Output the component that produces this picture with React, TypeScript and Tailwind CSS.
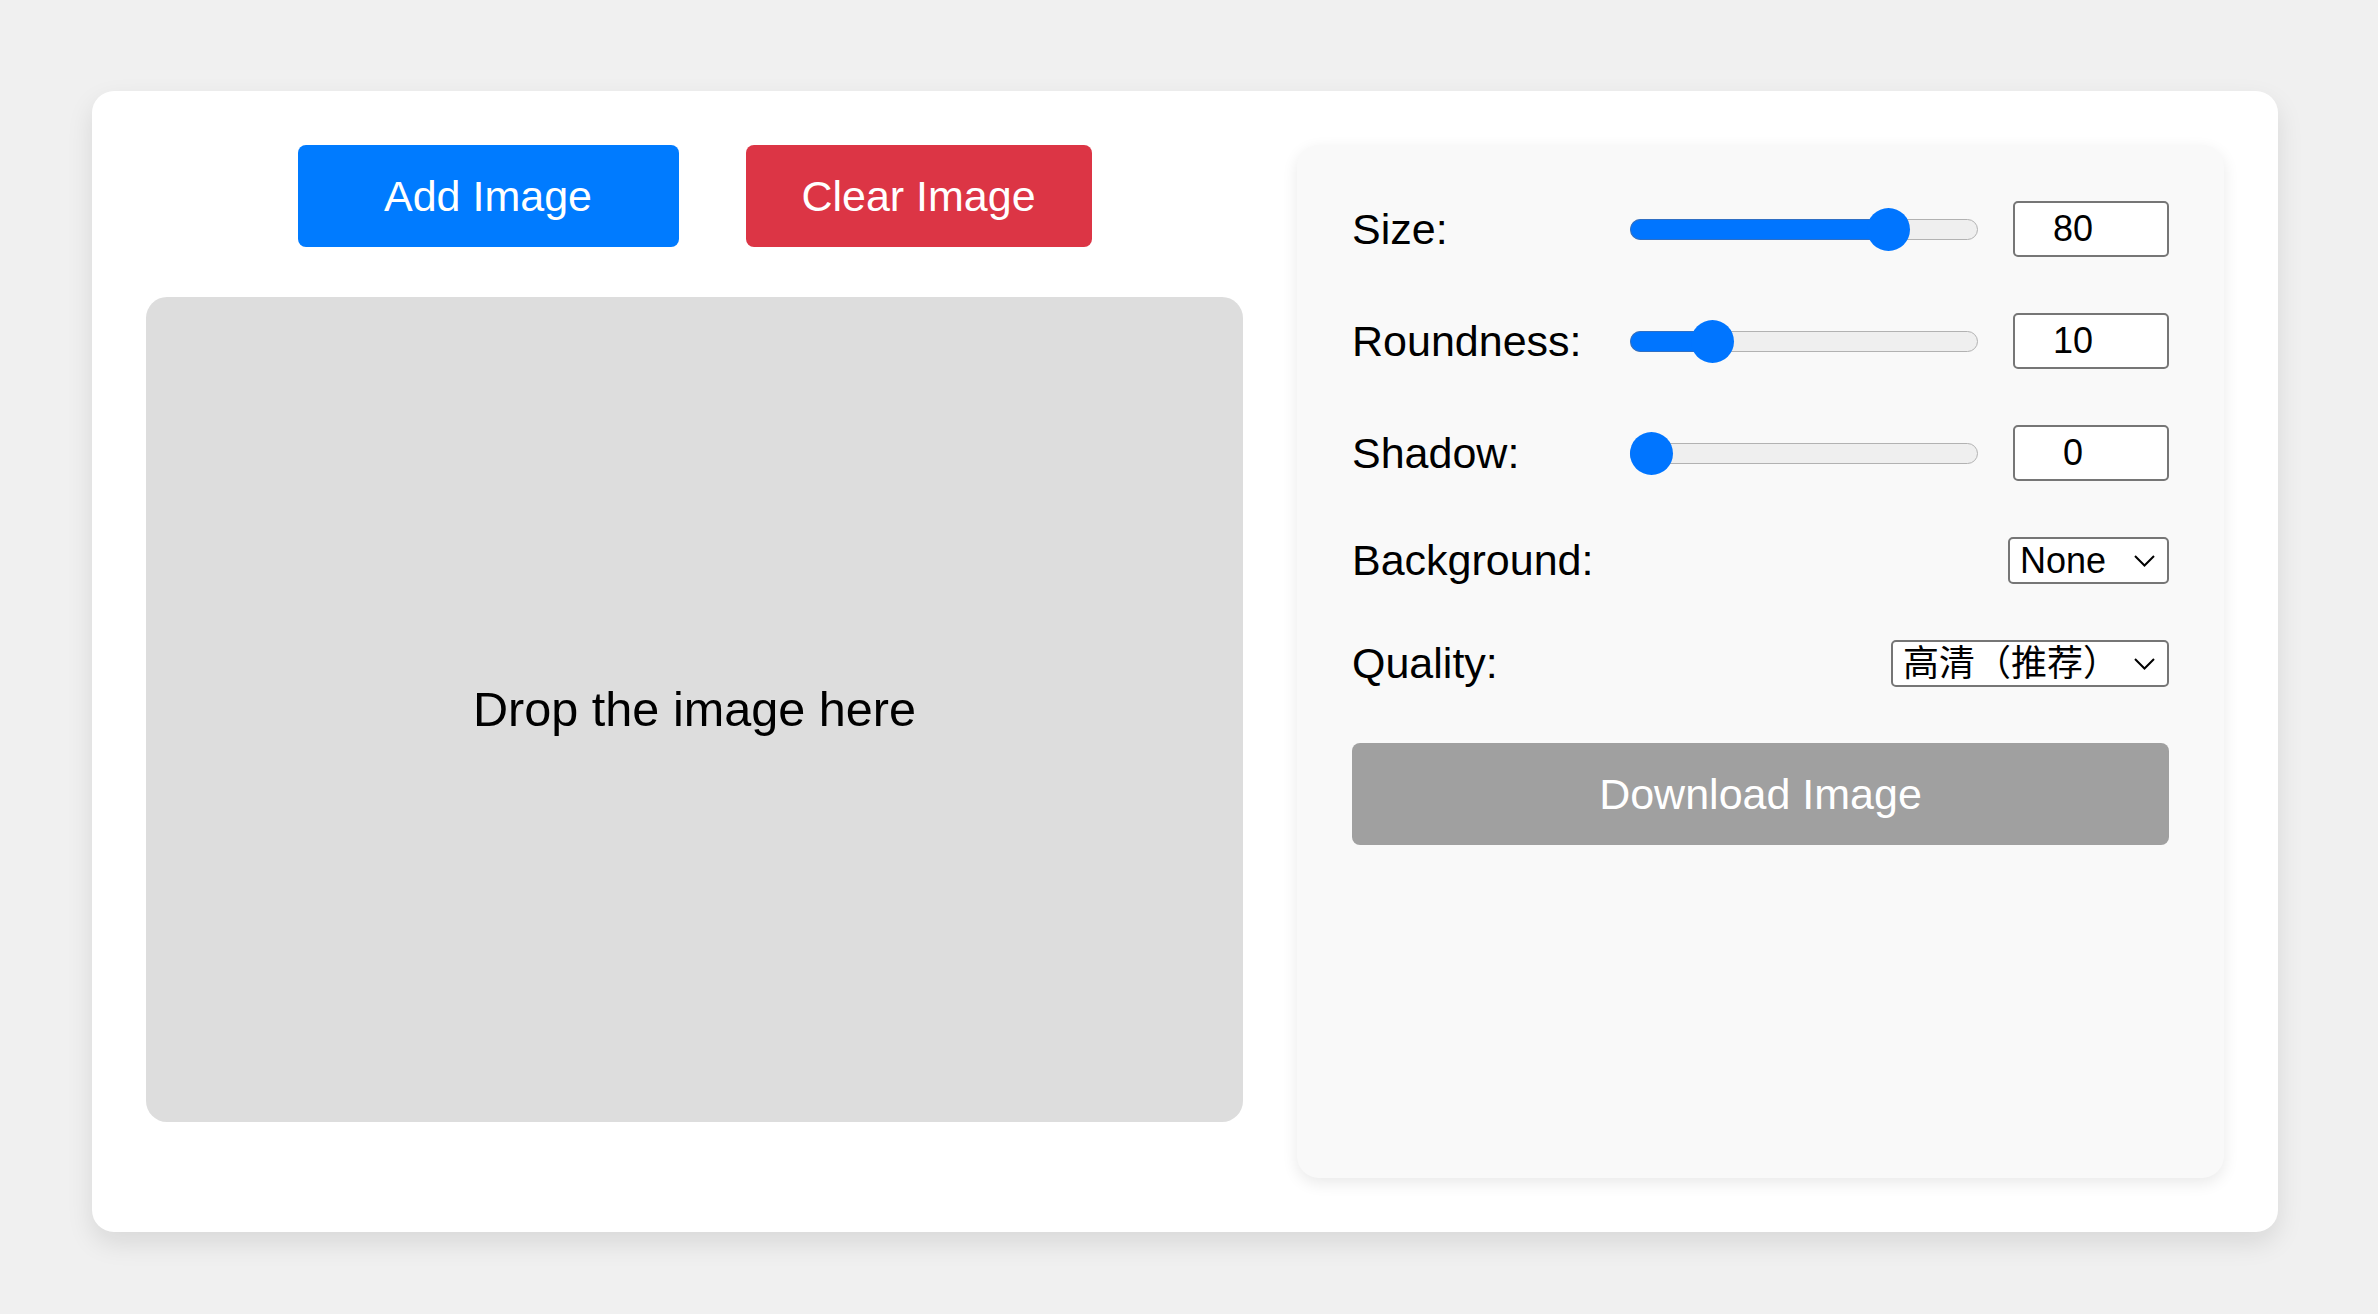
import React from 'react';

// thumb travel: track is 348px wide, thumb is 43px
function Slider({ frac }: { frac: number }) {
  const center = 21.5 + frac * (348 - 43);
  return (
    <div className="relative w-[348px] h-[43px] flex items-center">
      <div className="w-full h-[21px] rounded-full border-[1.5px] border-[#b2b2b2] bg-[#efefef]" />
      <div
        className="absolute left-0 top-[11px] h-[21px] rounded-l-full bg-[#0075ff] border-[1.5px] border-r-0 border-[#2f6fc4]"
        style={{ width: center }}
      />
      <div
        className="absolute top-0 w-[43px] h-[43px] rounded-full bg-[#0075ff]"
        style={{ left: center - 21.5 }}
      />
    </div>
  );
}

function SliderRow({ label, value, frac }: { label: string; value: string; frac: number }) {
  return (
    <div className="flex items-center h-[56px]">
      <span className="w-[278px] text-[43px] text-black">{label}</span>
      <Slider frac={frac} />
      <input
        readOnly
        value={value}
        className="ml-[35px] w-[156px] h-[56px] border-2 border-[#767676] rounded-[5px] bg-white text-[36px] text-black text-center pr-[36px] outline-none"
      />
    </div>
  );
}

function Chevron() {
  return (
    <svg width="21" height="12" viewBox="0 0 21 12" className="shrink-0">
      <polyline points="1,1 10.5,10.5 20,1" fill="none" stroke="#000" strokeWidth="2" />
    </svg>
  );
}

function SelectRow({ label, value, width }: { label: string; value: string; width: string }) {
  return (
    <div className="flex items-center justify-between h-[47px]">
      <span className="text-[43px] text-black">{label}</span>
      <div
        className={`${width} h-[47px] border-2 border-[#767676] rounded-[5px] bg-white flex items-center justify-between pl-[10px] pr-[12px]`}
      >
        <span className="text-[36px] text-black leading-none whitespace-nowrap">{value}</span>
        <Chevron />
      </div>
    </div>
  );
}

export default function App() {
  return (
    <div className="min-h-screen bg-[#f0f0f0] pt-[91px] pl-[92px] font-['Liberation_Sans','Noto_Sans_CJK_SC',sans-serif]">
      <div className="w-[2186px] bg-white rounded-[22px] shadow-[0_11px_27px_rgba(0,0,0,0.1)] p-[54px] flex items-start gap-[54px]">
        {/* left: buttons + drop area */}
        <div className="w-[1098px] flex flex-col">
          <div className="flex justify-center gap-[67px]">
            <button className="w-[381px] h-[102px] rounded-[8px] bg-[#007bff] text-white text-[43px]">
              Add Image
            </button>
            <button className="w-[346px] h-[102px] rounded-[8px] bg-[#dc3545] text-white text-[43px]">
              Clear Image
            </button>
          </div>
          <div className="mt-[50px] h-[825px] rounded-[21px] bg-[#dddddd] flex items-center justify-center">
            <span className="text-[48.6px] text-black">Drop the image here</span>
          </div>
        </div>

        {/* right: settings panel */}
        <div className="w-[927px] h-[1033px] rounded-[22px] bg-[#f9f9f9] shadow-[0_5px_16px_rgba(0,0,0,0.09)] pt-[56px] px-[55px] pb-[55px] flex flex-col gap-[56px]">
          <SliderRow label="Size:" value="80" frac={0.778} />
          <SliderRow label="Roundness:" value="10" frac={0.2} />
          <SliderRow label="Shadow:" value="0" frac={0} />
          <SelectRow label="Background:" value="None" width="w-[161px]" />
          <SelectRow label="Quality:" value="高清（推荐）" width="w-[278px]" />
          <button className="w-full h-[102px] rounded-[8px] bg-[#a0a0a0] text-white text-[43px]">
            Download Image
          </button>
        </div>
      </div>
    </div>
  );
}
